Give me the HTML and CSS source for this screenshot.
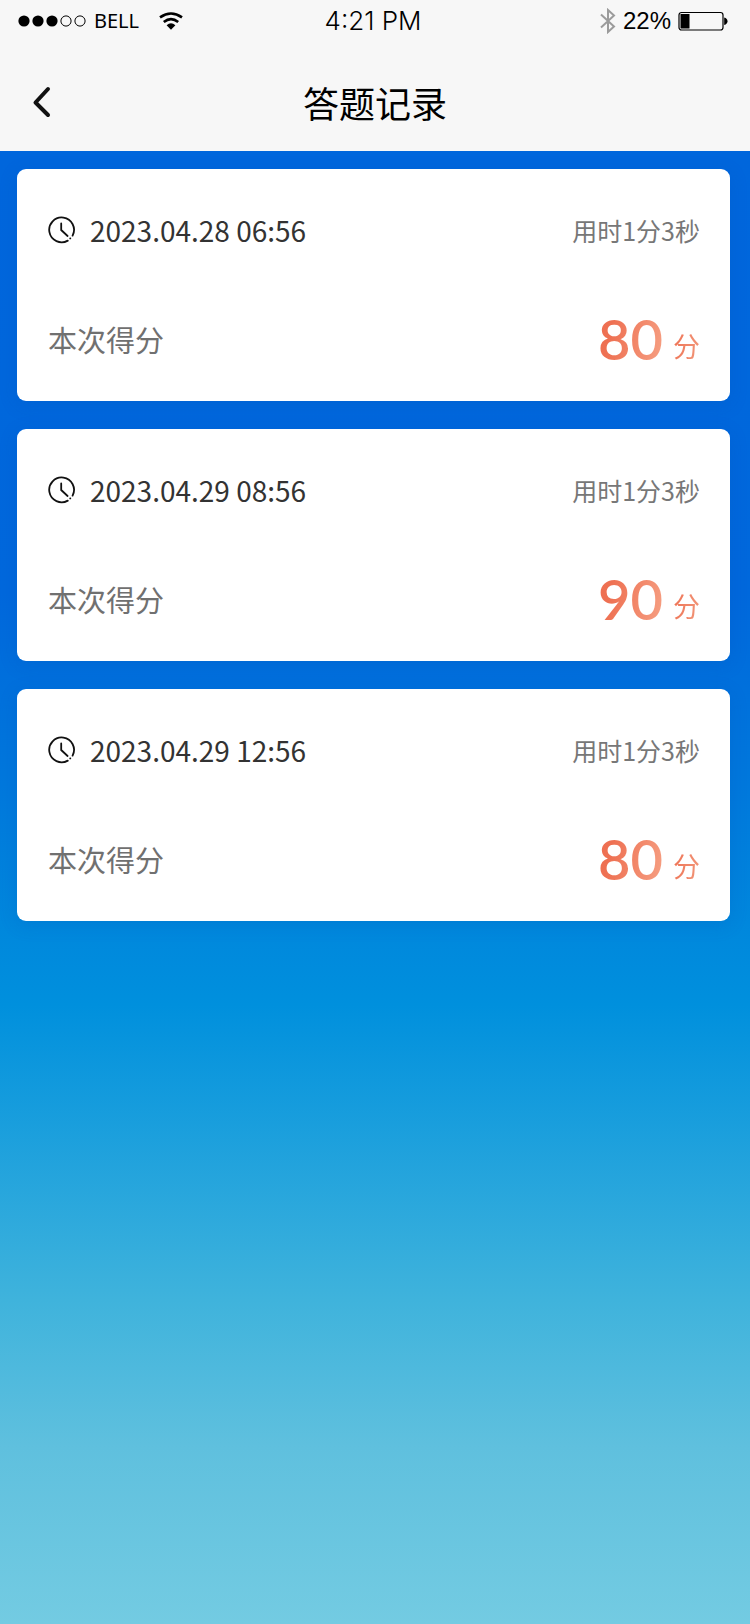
FILE: index.html
```html
<!DOCTYPE html>
<html lang="zh-CN">
<head>
<meta charset="utf-8">
<meta name="viewport" content="width=device-width, initial-scale=1">
<title>答题记录</title>
<link rel="stylesheet" href="styles.css">
</head>
<body>
<header class="top">
  <div class="status">
    <div class="status-left">
      <svg class="signal" width="68" height="12" viewBox="0 0 68 12" aria-hidden="true">
        <circle cx="6" cy="6" r="5.6"/><circle cx="20" cy="6" r="5.6"/><circle cx="34" cy="6" r="5.6"/>
        <g fill="none" stroke="#000"><circle cx="48" cy="6" r="5.1"/><circle cx="62" cy="6" r="5.1"/></g>
      </svg>
      <span class="carrier">BELL</span>
      <svg class="wifi" width="24" height="18" viewBox="0 0 24 18" aria-hidden="true">
        <g fill="none" stroke="#000" stroke-width="2.6"><path d="M1 5.4Q12-2.4 23 5.4"/><path d="M4.8 10Q12 4.2 19.2 10"/></g>
        <path d="M12 17.8 7.6 13.2Q12 9.4 16.4 13.2Z"/>
      </svg>
    </div>
    <span class="time">4:21 PM</span>
    <div class="status-right">
      <svg width="16" height="26" viewBox="0 0 16 26" fill="none" stroke="#9b9b9b" stroke-width="2" aria-hidden="true">
        <path d="M1 6.5 14 18.5 8 24V2L14 7.5 1 19.5"/>
      </svg>
      <span class="percent">22%</span>
      <svg width="50" height="20" viewBox="0 0 50 20" aria-hidden="true">
        <rect x="1" y="1.5" width="44" height="17.5" rx="2.5" fill="none" stroke="#000" stroke-width="1.2"/>
        <rect x="2.5" y="3" width="9" height="14.5"/>
        <path d="M46.2 6.5Q49.5 7.5 49.5 10.2T46.2 14Z"/>
      </svg>
    </div>
  </div>
  <div class="nav">
    <button class="back" type="button" aria-label="返回">
      <svg width="20" height="32" viewBox="0 0 20 32" fill="none" stroke="#111" stroke-width="4" stroke-linecap="round" stroke-linejoin="round" aria-hidden="true"><path d="M16 3 3.5 16.5 16 29"/></svg>
    </button>
    <h1 class="title">答题记录</h1>
  </div>
</header>
<main class="records">
  <article class="card">
    <div class="row">
      <div class="when">
        <svg width="28" height="28" viewBox="0 0 28 28" fill="none" stroke="#111" stroke-width="1.8" stroke-linecap="round" aria-hidden="true"><path d="M24.6 19.6A12.4 12.4 0 1 0 19.8 24.6"/><path d="M13.2 7.5V14L19.6 20"/><path d="M22.2 22.4h.1"/></svg>
        <time datetime="2023-04-28T06:56">2023.04.28 06:56</time>
      </div>
      <span class="spent">用时1分3秒</span>
    </div>
    <div class="row result">
      <span class="label">本次得分</span>
      <p class="score"><span class="points">80</span><span class="unit">分</span></p>
    </div>
  </article>
  <article class="card">
    <div class="row">
      <div class="when">
        <svg width="28" height="28" viewBox="0 0 28 28" fill="none" stroke="#111" stroke-width="1.8" stroke-linecap="round" aria-hidden="true"><path d="M24.6 19.6A12.4 12.4 0 1 0 19.8 24.6"/><path d="M13.2 7.5V14L19.6 20"/><path d="M22.2 22.4h.1"/></svg>
        <time datetime="2023-04-29T08:56">2023.04.29 08:56</time>
      </div>
      <span class="spent">用时1分3秒</span>
    </div>
    <div class="row result">
      <span class="label">本次得分</span>
      <p class="score"><span class="points">90</span><span class="unit">分</span></p>
    </div>
  </article>
  <article class="card">
    <div class="row">
      <div class="when">
        <svg width="28" height="28" viewBox="0 0 28 28" fill="none" stroke="#111" stroke-width="1.8" stroke-linecap="round" aria-hidden="true"><path d="M24.6 19.6A12.4 12.4 0 1 0 19.8 24.6"/><path d="M13.2 7.5V14L19.6 20"/><path d="M22.2 22.4h.1"/></svg>
        <time datetime="2023-04-29T12:56">2023.04.29 12:56</time>
      </div>
      <span class="spent">用时1分3秒</span>
    </div>
    <div class="row result">
      <span class="label">本次得分</span>
      <p class="score"><span class="points">80</span><span class="unit">分</span></p>
    </div>
  </article>
</main>
</body>
</html>
```

FILE: styles.css
```css
* {
  box-sizing: border-box;
}

body {
  margin: 0;
  min-height: 100vh;
  display: flex;
  flex-direction: column;
  font-family: "Noto Sans CJK SC", sans-serif;
  color: #333;
}

.top {
  background: #f7f7f7;
  color: #000;
}

.status {
  display: grid;
  grid-template-columns: 1fr auto 1fr;
  align-items: center;
  height: 41px;
  padding: 0 22px 0 18px;
}

.status-left,
.status-right {
  display: flex;
  align-items: center;
}

.status-left {
  gap: 8px;
}

.status-right {
  justify-content: flex-end;
  gap: 7px;
}

.carrier {
  font: 20px/28px "Noto Sans", sans-serif;
}

.wifi {
  margin-left: 12px;
}

.time {
  font: 300 26px/28px Inter, sans-serif;
}

.percent {
  font: 24px/28px "Liberation Sans", Arial, sans-serif;
}

.nav {
  display: grid;
  grid-template-columns: 1fr auto 1fr;
  align-items: center;
  height: 110px;
  padding: 12px 32px 0;
}

.back {
  display: flex;
  justify-self: start;
  padding: 0;
  border: 0;
  background: none;
  cursor: pointer;
}

.title {
  margin: 0;
  font-size: 36px;
  line-height: 52px;
  font-weight: 400;
}

.records {
  flex: 1;
  display: flex;
  flex-direction: column;
  gap: 28px;
  padding: 18px 20px 28px 17px;
  background: linear-gradient(#0066dc 0%, #0068dc 30%, #0078dc 43%, #0090dd 58%, #3fb3dc 78%, #5fc0de 88%, #73cbe2 100%);
}

.card {
  padding: 40px 30px 34px 31px;
  border-radius: 9px;
  background: #fff;
  box-shadow: 0 4px 18px rgba(0, 80, 180, 0.2);
}

.row {
  display: flex;
  align-items: center;
  justify-content: space-between;
  height: 42px;
}

.result {
  height: 56px;
  margin-top: 60px;
}

.when {
  display: flex;
  align-items: center;
  gap: 14px;
  font-size: 28px;
  line-height: 40px;
}

.spent {
  font-size: 25px;
  line-height: 40px;
  color: #777;
}

.label {
  font-size: 29px;
  line-height: 42px;
  color: #707070;
}

.score {
  display: flex;
  align-items: flex-end;
  gap: 10px;
  margin: 0;
}

.points {
  font: 600 56px/56px Lato, sans-serif;
  color: transparent;
  background: linear-gradient(100deg, #ee7052 20%, #f6a083 100%);
  background-clip: text;
}

.unit {
  font-size: 27px;
  line-height: 42px;
  color: transparent;
  background: linear-gradient(100deg, #ee7052 0%, #f29a7d 100%);
  background-clip: text;
}
```
